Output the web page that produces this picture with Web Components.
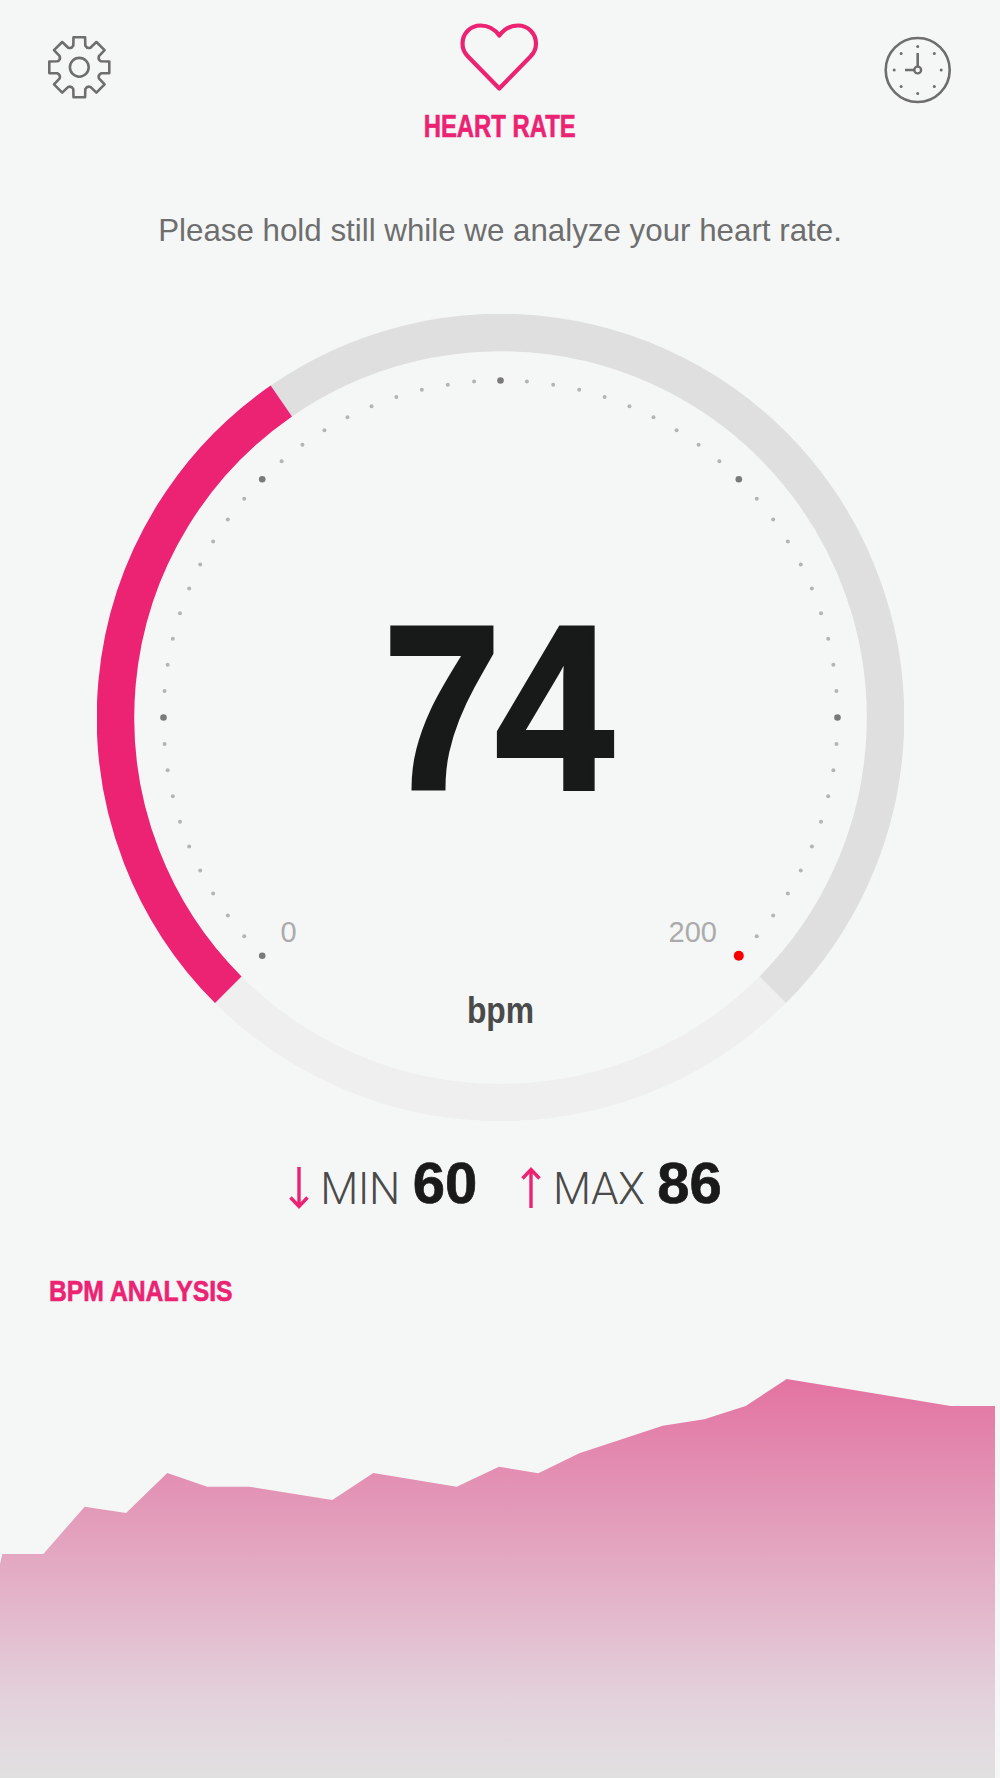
<!DOCTYPE html>
<html>
<head>
<meta charset="utf-8">
<title>Heart rate</title>
<style>
  html, body { margin: 0; padding: 0; background: #f5f7f6; }
  body { font-family: "Liberation Sans", Arial, sans-serif; }
</style>
</head>
<body>
<hr-screen>
  <hr-header slot="top" title="HEART RATE"></hr-header>
  <hr-hint slot="top">Please hold still while we analyze your heart rate.</hr-hint>
  <hr-gauge slot="top" value="74" unit="bpm"></hr-gauge>
  <hr-range slot="top" min="60" max="86"></hr-range>
  <hr-chart>BPM ANALYSIS</hr-chart>
</hr-screen>

<script>
const PINK = "#ec2273";

class HrScreen extends HTMLElement {
  constructor() {
    super();
    this.attachShadow({ mode: "open" }).innerHTML = `
      <style>
        :host { display: flex; flex-direction: column; width: 1000px; height: 1778px; overflow: hidden; background: #f5f7f6; }
        slot[name="top"] { display: block; }
      </style>
      <slot name="top"></slot>
      <slot></slot>
    `;
  }
}

class HrHeader extends HTMLElement {
  constructor() {
    super();
    const teeth = [];
    // 8 teeth, walked clockwise, joined by shallow valleys
    const pt = (r, a) => (79.3 + r * Math.sin(a)).toFixed(1) + " " + (67.3 - r * Math.cos(a)).toFixed(1);
    for (let i = 0; i < 8; i++) {
      const a = i * Math.PI / 4;
      const base = 0.27, tip = 0.19;
      teeth.push((i ? "L" : "M") + pt(22.5, a - base));
      teeth.push("L" + pt(30.5, a - tip));
      teeth.push("L" + pt(30.5, a + tip));
      teeth.push("L" + pt(22.5, a + base));
      const next = a + Math.PI / 4;
      teeth.push("Q" + pt(20, a + Math.PI / 8) + " " + pt(22.5, next - base));
    }
    const dots = [];
    for (let i = 0; i < 8; i++) {
      const a = i * Math.PI / 4;
      dots.push(`<circle cx="${(917.7 + 23.5 * Math.sin(a)).toFixed(1)}" cy="${(70 - 23.5 * Math.cos(a)).toFixed(1)}" r="1.5"/>`);
    }
    this.attachShadow({ mode: "open" }).innerHTML = `
      <style>
        :host { display: block; position: relative; height: 190px; }
        .title {
          display: flex; flex-direction: column; align-items: center;
          padding-top: 15px;
        }
        .title svg { display: block; }
        h1 {
          margin: 11px 0 0; font: bold 31px/1 "Liberation Sans", sans-serif;
          color: ${PINK}; white-space: nowrap; transform: scaleX(.77);
          -webkit-text-stroke: .6px ${PINK};
        }
        svg.icons { position: absolute; left: 0; top: 0; }
      </style>
      <svg class="icons" width="1000" height="120" fill="none" stroke="#6e6e6e" stroke-width="2.6">
        <path d="${teeth.join(" ")}Z" stroke-linejoin="round"/>
        <circle cx="79.3" cy="67.3" r="9.4"/>
        <circle cx="917.7" cy="70" r="32"/>
        <g fill="#6e6e6e" stroke="none">${dots.join("")}</g>
        <path d="M917.7 53V66M905 70H914"/>
        <circle cx="917.7" cy="70" r="3.4" stroke-width="2.4"/>
      </svg>
      <div class="title">
        <svg width="100" height="85" viewBox="0 0 100 85" fill="none">
          <path d="M49.3 73.5 L18 41.5 C14 37.5 12.5 33 12.5 28.5 C12.5 18.5 20.5 10.5 30.5 10.5 C38 10.5 45 14.5 49.3 20.5 C53.6 14.5 60.5 10.5 68 10.5 C78 10.5 86 18.5 86 28.5 C86 33 84.5 37.5 80.5 41.5 Z"
            stroke="${PINK}" stroke-width="4.2" stroke-linejoin="round"/>
        </svg>
        <h1>${this.getAttribute("title")}</h1>
      </div>
    `;
  }
}

class HrHint extends HTMLElement {
  constructor() {
    super();
    this.attachShadow({ mode: "open" }).innerHTML = `
      <style>
        :host { display: block; text-align: center; height: 124px; font-size: 31.3px; line-height: 34px; padding-top: 24px; box-sizing: border-box; color: #6e6e6e; }
      </style>
      <slot></slot>
    `;
  }
}

class HrGauge extends HTMLElement {
  constructor() {
    super();
    const cx = 403.5, cy = 403.5;
    const polar = (r, deg) => {
      const a = deg * Math.PI / 180;
      return [(cx + r * Math.sin(a)).toFixed(2), (cy - r * Math.cos(a)).toFixed(2)];
    };
    const arc = (from, to, color) => {
      const p = polar(385, from), q = polar(385, to);
      const large = (to - from) > 180 ? 1 : 0;
      return `<path d="M${p} A385 385 0 ${large} 1 ${q}" stroke="${color}"/>`;
    };
    let dots = "";
    for (let i = 0; i <= 60; i++) {
      const deg = 225 + i * 4.5;
      const [x, y] = polar(337, deg);
      const major = i % 10 === 0;
      const last = i === 60;
      const fill = last ? "#f60000" : major ? "#7a7a7a" : "#b4b4b4";
      const r = last ? 5 : major ? 3.3 : 2;
      dots += `<circle cx="${x}" cy="${y}" r="${r}" fill="${fill}"/>`;
    }
    this.attachShadow({ mode: "open" }).innerHTML = `
      <style>
        :host { display: block; position: relative; width: 807px; height: 807px; margin: 0 auto; }
        svg { display: block; }
        .value, .unit, .mark { position: absolute; white-space: nowrap; }
        .value {
          left: -5px; right: 5px; top: 278px; text-align: center; color: #181a19;
          font: bold 233px/1 "Liberation Sans", sans-serif; letter-spacing: -6px;
          -webkit-text-stroke: 4px #181a19; transform: scaleX(.91);
        }
        .unit {
          left: 0; right: 0; top: 678px; text-align: center; color: #4a4a4a;
          font: bold 37px/1 "Liberation Sans", sans-serif; transform: scaleX(.86);
        }
        .mark { top: 602px; color: #ababab; font-size: 29px; line-height: 32px; }
      </style>
      <svg width="807" height="807" fill="none" stroke-width="37.5">
        ${arc(135, 225, "#efefef")}
        ${arc(-34.7, 135, "#dfdfdf")}
        ${arc(225, 325.3, PINK)}
        ${dots}
      </svg>
      <div class="mark" style="left:184px">0</div>
      <div class="mark" style="left:572px">200</div>
      <div class="value">${this.getAttribute("value")}</div>
      <div class="unit">${this.getAttribute("unit")}</div>
    `;
  }
}

class HrRange extends HTMLElement {
  constructor() {
    super();
    const arrow = (d) => `<svg width="20" height="42" viewBox="0 0 20 42" fill="none" stroke="${PINK}" stroke-width="3.4">${d}</svg>`;
    this.attachShadow({ mode: "open" }).innerHTML = `
      <style>
        :host { display: flex; align-items: baseline; height: 153px; padding: 41px 0 0 288.5px; box-sizing: border-box; color: #4a4a4a; }
        .item { display: flex; align-items: flex-end; height: 50px; }
        .item + .item { margin-left: 44px; }
        svg { display: block; margin-right: 11.7px; margin-bottom: 3px; }
        .label { font: 300 44px/1 Roboto, "Liberation Sans", sans-serif; margin-right: 13px; letter-spacing: -.5px; position: relative; top: -1px; }
        b { font: bold 58px/1 "Liberation Sans", sans-serif; color: #1a1a1a; -webkit-text-stroke: .7px #1a1a1a; }
      </style>
      <div class="item">${arrow('<path d="M10 0V40M1.5 30.5L10 39.5L18.5 30.5"/>')}<span class="label">MIN</span><b>${this.getAttribute("min")}</b></div>
      <div class="item">${arrow('<path d="M10 41V2M1.5 11.5L10 2.5L18.5 11.5"/>')}<span class="label">MAX</span><b>${this.getAttribute("max")}</b></div>
    `;
  }
}

class HrChart extends HTMLElement {
  constructor() {
    super();
    const pts = [[0,185],[2.3,175],[43.3,175],[84.7,127.7],[126,134],[167.3,94],[207.3,107.7],[249.3,107.7],[332.3,121],[373.3,94],[456.7,107.7],[499,87.7],[538.3,94.3],[579.3,74.3],[662.7,46.7],[704.3,40.3],[745.7,27],[786.7,0],[950.7,27],[995,27],[995,399],[0,399]];
    this.attachShadow({ mode: "open" }).innerHTML = `
      <style>
        :host { display: flex; flex-direction: column; flex: 1; min-height: 0; }
        h2 {
          margin: 0 0 0 49px; height: 105px; font: bold 30px/34px "Liberation Sans", sans-serif;
          color: ${PINK}; transform: scaleX(.824); transform-origin: 0 0;
          -webkit-text-stroke: .6px ${PINK};
        }
        svg { display: block; }
      </style>
      <h2><slot></slot></h2>
      <svg width="1000" height="399">
        <defs>
          <linearGradient id="fade" x1="0" y1="0" x2="0" y2="1">
            <stop offset="0" stop-color="#e373a1"/>
            <stop offset=".78" stop-color="#e3cfda"/>
            <stop offset=".955" stop-color="#e2dde0"/>
            <stop offset="1" stop-color="#e1e0e0"/>
          </linearGradient>
        </defs>
        <polygon points="${pts.join(" ")}" fill="url(#fade)"/>
      </svg>
    `;
  }
}

customElements.define("hr-screen", HrScreen);
customElements.define("hr-header", HrHeader);
customElements.define("hr-hint", HrHint);
customElements.define("hr-gauge", HrGauge);
customElements.define("hr-range", HrRange);
customElements.define("hr-chart", HrChart);
</script>
</body>
</html>
